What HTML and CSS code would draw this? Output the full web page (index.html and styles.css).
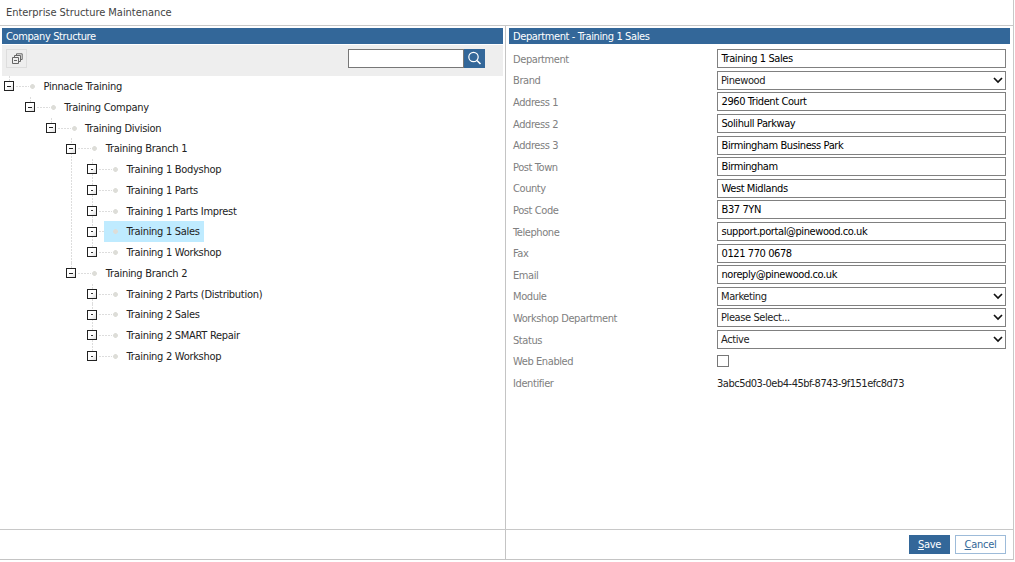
FILE: index.html
```html
<!DOCTYPE html>
<html lang="en">
<head>
<meta charset="utf-8">
<title>Enterprise Structure Maintenance</title>
<link rel="stylesheet" href="styles.css">
</head>
<body>
<div class="app">
  <header class="title"><span>Enterprise Structure Maintenance</span></header>
  <main class="panes">
    <section class="left">
      <h2 class="bar">Company Structure</h2>
      <div class="toolbar">
        <button class="collapse" aria-label="Collapse all"><svg width="12" height="12" viewBox="0 0 12 12" fill="none" stroke="#666"><path d="M1.5 4.5h6v6h-6zM3 7.5h3M3.500 4.500V2.500h6v6H7.500M5.500 2.500V.8h5.700v5.700H9.500"/></svg></button>
        <div class="search"><input type="text" aria-label="Search"><button aria-label="Find"><svg width="15" height="15" viewBox="0 0 15 15" fill="none" stroke="#fff" stroke-width="1.2"><circle cx="6.500" cy="6" r="4.700"/><path d="M10 9.500l3.500 3.500" stroke-width="1.600"/></svg></button></div>
      </div>
      <ul class="tree">
        <li><div class="node"><i class="box open"></i><span class="name">Pinnacle Training</span></div>
          <ul><li><div class="node"><i class="box open"></i><span class="name">Training Company</span></div>
            <ul><li><div class="node"><i class="box open"></i><span class="name">Training Division</span></div>
              <ul>
                <li><div class="node"><i class="box open"></i><span class="name">Training Branch 1</span></div>
                  <ul>
                    <li><div class="node"><i class="box"></i><span class="name">Training 1 Bodyshop</span></div></li>
                    <li><div class="node"><i class="box"></i><span class="name">Training 1 Parts</span></div></li>
                    <li><div class="node"><i class="box"></i><span class="name">Training 1 Parts Imprest</span></div></li>
                    <li><div class="node"><i class="box"></i><span class="name selected">Training 1 Sales</span></div></li>
                    <li><div class="node"><i class="box"></i><span class="name">Training 1 Workshop</span></div></li>
                  </ul></li>
                <li><div class="node"><i class="box open"></i><span class="name">Training Branch 2</span></div>
                  <ul>
                    <li><div class="node"><i class="box"></i><span class="name">Training 2 Parts (Distribution)</span></div></li>
                    <li><div class="node"><i class="box"></i><span class="name">Training 2 Sales</span></div></li>
                    <li><div class="node"><i class="box"></i><span class="name">Training 2 SMART Repair</span></div></li>
                    <li><div class="node"><i class="box"></i><span class="name">Training 2 Workshop</span></div></li>
                  </ul></li>
              </ul></li></ul></li></ul></li>
      </ul>
    </section>
    <section class="right">
      <h2 class="bar">Department - Training 1 Sales</h2>
      <form class="form">
        <label>Department</label><div class="field">Training 1 Sales</div>
        <label>Brand</label><div class="field pick"><span>Pinewood</span><svg class="chev" viewBox="0 0 10 7"><path d="M1 1l4 4 4-4"/></svg></div>
        <label>Address 1</label><div class="field">2960 Trident Court</div>
        <label>Address 2</label><div class="field">Solihull Parkway</div>
        <label>Address 3</label><div class="field">Birmingham Business Park</div>
        <label>Post Town</label><div class="field">Birmingham</div>
        <label>County</label><div class="field">West Midlands</div>
        <label>Post Code</label><div class="field">B37 7YN</div>
        <label>Telephone</label><div class="field">support.portal@pinewood.co.uk</div>
        <label>Fax</label><div class="field">0121 770 0678</div>
        <label>Email</label><div class="field">noreply@pinewood.co.uk</div>
        <label>Module</label><div class="field pick"><span>Marketing</span><svg class="chev" viewBox="0 0 10 7"><path d="M1 1l4 4 4-4"/></svg></div>
        <label>Workshop Department</label><div class="field pick"><span>Please Select...</span><svg class="chev" viewBox="0 0 10 7"><path d="M1 1l4 4 4-4"/></svg></div>
        <label>Status</label><div class="field pick"><span>Active</span><svg class="chev" viewBox="0 0 10 7"><path d="M1 1l4 4 4-4"/></svg></div>
        <label>Web Enabled</label><div class="check"></div>
        <label>Identifier</label><span class="ident">3abc5d03-0eb4-45bf-8743-9f151efc8d73</span>
      </form>
    </section>
  </main>
  <footer class="foot">
    <div class="footleft"></div>
    <div class="actions"><button class="btn save"><u>S</u>ave</button><button class="btn"><u>C</u>ancel</button></div>
  </footer>
</div>
</body>
</html>
```
FILE: styles.css
```css
* { box-sizing: border-box; }
body { margin: 0; background: #fff; color: #222; font: 11px "DejaVu Sans Condensed", "DejaVu Sans", sans-serif; font-stretch: condensed; letter-spacing: -0.29px; overflow: hidden; }
ul { list-style: none; margin: 0; padding: 0; }
button, input { font: inherit; letter-spacing: inherit; padding: 0; margin: 0; }
.app { width: 1014px; height: 560px; display: flex; flex-direction: column; border-right: 1px solid #c8c8c8; border-bottom: 1px solid #c4c4c4; }
.title { height: 26px; border-bottom: 1px solid #c8c8c8; padding: 0 6px; line-height: 25px; color: #444; letter-spacing: -0.04px; }
.panes { height: 503px; display: flex; }
.left { width: 506px; border-right: 1px solid #c4c4c4; padding: 2px 2px 0; }
.right { flex: 1; padding: 2px 3px 0; }
.bar { margin: 0; height: 16px; line-height: 17px; padding-left: 4px; background: #336799; color: #fff; font-size: 11px; font-weight: 400; letter-spacing: -0.38px; }
.toolbar { margin-top: 1px; height: 31px; background: #eee; display: flex; justify-content: space-between; padding: 4px 18px 0 4px; }
.collapse { width: 21px; height: 19px; border: 1px solid #ddd; background: #eee; display: grid; place-items: center; }
.search { display: flex; width: 137px; height: 19px; }
.search input { width: 116px; border: 1px solid #777; background: #fff; }
.search button { width: 21px; border: 0; background: #336799; display: grid; place-items: center; }
.tree li { background: repeating-linear-gradient(#ddd 0 2px, transparent 2px 3px) 7px 0 / 1px 100% no-repeat; }
.tree li:last-child { background-size: 1px 10px; }
.tree li ul { padding-left: 20.75px; }
.node { height: 20.75px; display: flex; align-items: center; padding-left: 2px; background: repeating-linear-gradient(90deg, #ddd 0 2px, transparent 2px 3px) 14px 10px / 13px 1px no-repeat; }
.box { width: 10px; height: 10px; border: 1px solid #222; background: linear-gradient(#333, #333) center / 2px 1px no-repeat, linear-gradient(135deg, #fff 50%, #ddd); }
.box.open { background: linear-gradient(#222, #222) center / 4px 1px no-repeat, linear-gradient(135deg, #fff 50%, #ddd); }
.name { height: 20.75px; line-height: 21px; margin-left: 7px; padding: 0 4px 0 22.500px; white-space: nowrap; background: radial-gradient(circle at 11.500px 10.500px, #ddddd8 2px, transparent 2.800px); }
.name.selected { background-color: #bfebff; }
.form { display: grid; grid-template-columns: 204px 289px; grid-auto-rows: 21.600px; align-items: center; padding: 4px 0 0 4px; letter-spacing: -0.41px; }
.form label { color: #808080; padding-top: 1px; }
.field { height: 19px; border: 1px solid #808080; padding-left: 3.500px; line-height: 18px; background: #fff; color: #000; }
.pick { display: flex; justify-content: space-between; padding: 0 2px 0 3px; align-items: center; color: #222; }
.pick span { padding-top: 1px; }
.ident { letter-spacing: -0.48px; padding-top: 1px; }
.chev { width: 10px; height: 7px; fill: none; stroke: #111; stroke-width: 1.700; }
.check { width: 12px; height: 12px; border: 1px solid #777; }
.foot { flex: 1; display: flex; border-top: 1px solid #c8c8c8; }
.footleft { width: 506px; border-right: 1px solid #c4c4c4; }
.actions { flex: 1; display: flex; justify-content: flex-end; gap: 5px; padding: 5px 7px 0 0; }
.btn { width: 51px; height: 19px; border: 1px solid #9dbbd9; background: #fff; color: #336799; }
.save { width: 41px; border-color: #336799; background: #336799; color: #fff; }
```
